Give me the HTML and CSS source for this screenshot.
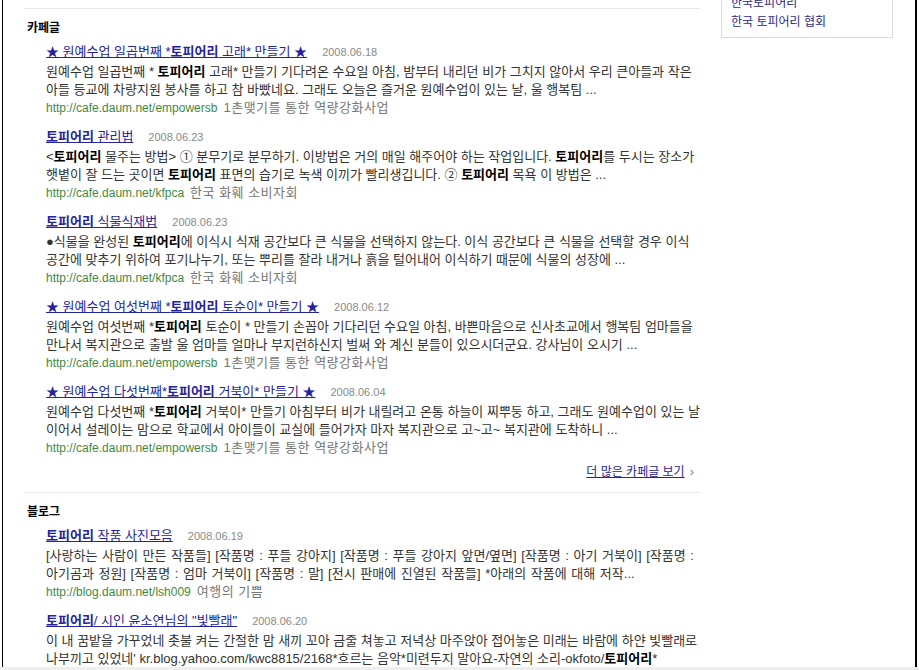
FILE: index.html
```html
<!DOCTYPE html>
<html lang="ko">
<head>
    <meta charset="UTF-8">
    <title>토피어리 - 검색결과</title>
    <link rel="stylesheet" href="styles.css">
</head>
<body>

<div class="frame">
    <div class="main">

        <div class="section">
            <h3 class="section-title">카페글</h3>

            <div class="entry">
                <div class="entry-title"><a href="#">★ 원예수업 일곱번째 *<b>토피어리</b> 고래* 만들기 ★</a><span class="date">2008.06.18</span></div>
                <p class="desc">원예수업 일곱번째 * <b>토피어리</b> 고래* 만들기 기다려온 수요일 아침, 밤부터 내리던 비가 그치지 않아서 우리 큰아들과 작은<br>아들 등교에 차량지원 봉사를 하고 참 바빴네요. 그래도 오늘은 즐거운 원예수업이 있는 날, 울 행복팀 ...</p>
                <div class="src"><span class="url">http://cafe.daum.net/empowersb</span><span class="name">1촌맺기를 통한 역량강화사업</span></div>
            </div>

            <div class="entry">
                <div class="entry-title"><a href="#"><b>토피어리</b> 관리법</a><span class="date">2008.06.23</span></div>
                <p class="desc">&lt;<b>토피어리</b> 물주는 방법&gt; ① 분무기로 분무하기. 이방법은 거의 매일 해주어야 하는 작업입니다. <b>토피어리</b>를 두시는 장소가<br>햇볕이 잘 드는 곳이면 <b>토피어리</b> 표면의 습기로 녹색 이끼가 빨리생깁니다. ② <b>토피어리</b> 목욕 이 방법은 ...</p>
                <div class="src"><span class="url">http://cafe.daum.net/kfpca</span><span class="name">한국 화훼 소비자회</span></div>
            </div>

            <div class="entry">
                <div class="entry-title"><a href="#"><b>토피어리</b> 식물식재법</a><span class="date">2008.06.23</span></div>
                <p class="desc">●식물을 완성된 <b>토피어리</b>에 이식시 식재 공간보다 큰 식물을 선택하지 않는다. 이식 공간보다 큰 식물을 선택할 경우 이식<br>공간에 맞추기 위하여 포기나누기, 또는 뿌리를 잘라 내거나 흙을 털어내어 이식하기 때문에 식물의 성장에 ...</p>
                <div class="src"><span class="url">http://cafe.daum.net/kfpca</span><span class="name">한국 화훼 소비자회</span></div>
            </div>

            <div class="entry">
                <div class="entry-title"><a href="#">★ 원예수업 여섯번째 *<b>토피어리</b> 토순이* 만들기 ★</a><span class="date">2008.06.12</span></div>
                <p class="desc">원예수업 여섯번째 *<b>토피어리</b> 토순이 * 만들기 손꼽아 기다리던 수요일 아침, 바쁜마음으로 신사초교에서 행복팀 엄마들을<br>만나서 복지관으로 출발 울 엄마들 얼마나 부지런하신지 벌써 와 계신 분들이 있으시더군요. 강사님이 오시기 ...</p>
                <div class="src"><span class="url">http://cafe.daum.net/empowersb</span><span class="name">1촌맺기를 통한 역량강화사업</span></div>
            </div>

            <div class="entry last">
                <div class="entry-title"><a href="#">★ 원예수업 다섯번째*<b>토피어리</b> 거북이* 만들기 ★</a><span class="date">2008.06.04</span></div>
                <p class="desc">원예수업 다섯번째 *<b>토피어리</b> 거북이* 만들기 아침부터 비가 내릴려고 온통 하늘이 찌뿌둥 하고, 그래도 원예수업이 있는 날<br>이어서 설레이는 맘으로 학교에서 아이들이 교실에 들어가자 마자 복지관으로 고~고~ 복지관에 도착하니 ...</p>
                <div class="src"><span class="url">http://cafe.daum.net/empowersb</span><span class="name">1촌맺기를 통한 역량강화사업</span></div>
            </div>

            <div class="more"><a href="#">더 많은 카페글 보기</a><span class="arrow">›</span></div>
        </div>

        <div class="section">
            <h3 class="section-title">블로그</h3>

            <div class="entry">
                <div class="entry-title"><a href="#"><b>토피어리</b> 작품 사진모음</a><span class="date">2008.06.19</span></div>
                <p class="desc brackets">[사랑하는 사람이 만든 작품들] [작품명 : 푸들 강아지] [작품명 : 푸들 강아지 앞면/옆면] [작품명 : 아기 거북이] [작품명 :<br>아기곰과 정원] [작품명 : 엄마 거북이] [작품명 : 말] [전시 판매에 진열된 작품들] *아래의 작품에 대해 저작...</p>
                <div class="src"><span class="url">http://blog.daum.net/lsh009</span><span class="name">여행의 기쁨</span></div>
            </div>

            <div class="entry">
                <div class="entry-title"><a href="#"><b>토피어리</b>/ 시인 윤소연님의 "빛빨래"</a><span class="date">2008.06.20</span></div>
                <p class="desc">이 내 꿈밭을 가꾸었네 촛불 켜는 간절한 맘 새끼 꼬아 금줄 쳐놓고 저녁상 마주앉아 접어놓은 미래는 바람에 하얀 빛빨래로<br>나부끼고 있었네' kr.blog.yahoo.com/kwc8815/2168*흐르는 음악*미련두지 말아요-자연의 소리-okfoto/<b>토피어리</b>*</p>
            </div>
        </div>

    </div>

    <div class="side">
        <div class="side-box">
            <a href="#">한국토피어리</a>
            <a href="#">한국 토피어리 협회</a>
        </div>
    </div>
</div>
<div class="statusbar"></div>

</body>
</html>
```

FILE: styles.css
```css
html, body {
    margin: 0;
    padding: 0;
    background-color: #fff;
    overflow: hidden;
}
body {
    font-family: "Liberation Sans", "Noto Sans CJK KR", sans-serif;
    font-size: 12px;
    color: #333;
}
a {
    color: #2424a0;
}
b {
    color: #000;
    font-weight: bold;
}
a b {
    color: inherit;
}

.frame {
    display: flex;
    height: 667px;
    width: 912px;
    margin-left: 2px;
    border-left: 1px solid #000;
    border-right: 2px solid #000;
}
.statusbar {
    height: 3px;
    background-color: #efefef;
}

.main {
    width: 676px;
    margin-left: 21px;
    padding-top: 8px;
}
.section {
    border-top: 1px solid #e8e8e8;
    padding-top: 10px;
}
.section-title {
    margin: 0 0 6px 3px;
    font-size: 12px;
    line-height: 18px;
    font-weight: bold;
    color: #000;
}

.entry {
    padding-left: 22px;
    margin-bottom: 11px;
}
.entry.last {
    margin-bottom: 6px;
}
.entry-title {
    font-size: 13px;
    line-height: 18px;
    margin-bottom: 2px;
    white-space: nowrap;
}
.entry-title a {
    text-decoration: underline;
}
.date {
    margin-left: 15px;
    font-size: 11px;
    color: #8a8a8a;
}
.desc {
    margin: 0;
    font-size: 13px;
    line-height: 18px;
    white-space: nowrap;
}
.desc.brackets {
    word-spacing: 1px;
}
.src {
    line-height: 18px;
    font-size: 12px;
}
.url {
    color: #3f8a3f;
}
.name {
    margin-left: 6px;
    font-size: 13px;
    letter-spacing: 0.5px;
    color: #777;
}

.more {
    text-align: right;
    padding-right: 6px;
    line-height: 18px;
    margin-bottom: 11px;
}
.more .arrow {
    margin-left: 5px;
    color: #888;
    font-size: 13px;
}

.side {
    margin-left: 21px;
    width: 172px;
    margin-top: -14px;
}
.side-box {
    border: 1px solid #dcdcdc;
    border-top: none;
    padding: 8px 9px 5px;
}
.side-box a {
    display: block;
    line-height: 19px;
    text-decoration: none;
    color: #2b2b8a;
}
```
